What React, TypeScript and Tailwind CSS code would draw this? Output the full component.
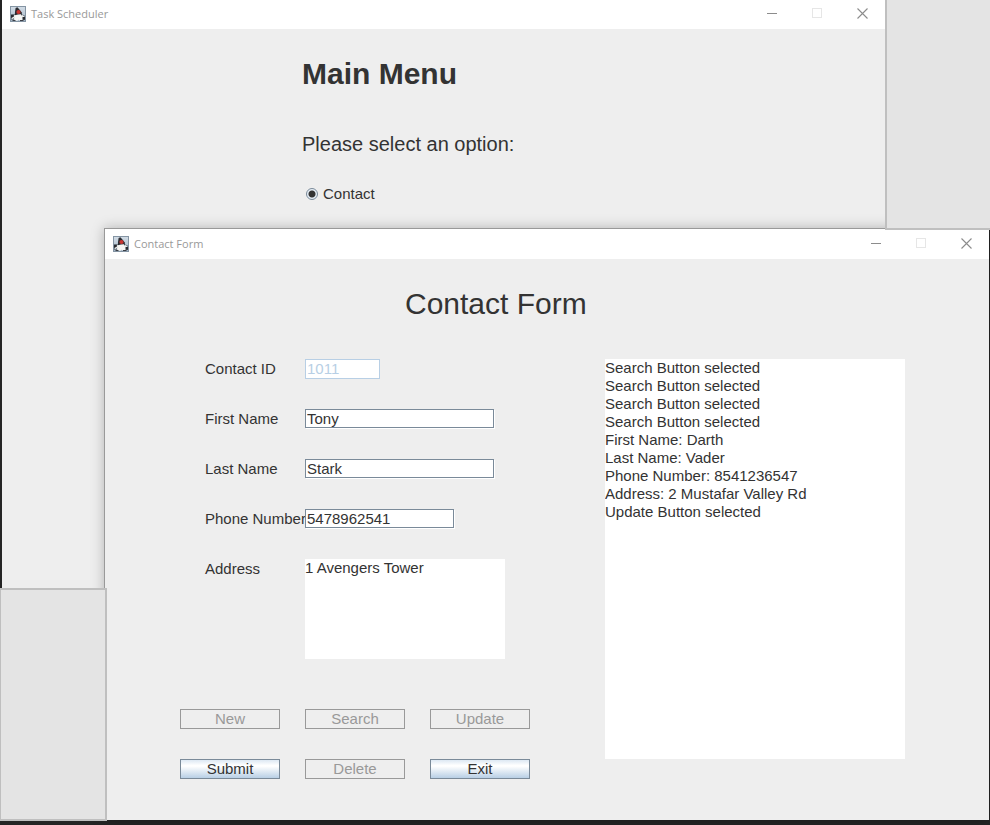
import { useState, type ReactNode } from "react";

function DukeIcon() {
  return (
    <svg width="16" height="16" viewBox="0 0 16 16" aria-hidden="true" className="shrink-0">
      <defs>
        <linearGradient id="duke-sky" x1="0" y1="0" x2="0" y2="1">
          <stop offset="0" stopColor="#d3dde6" />
          <stop offset="1" stopColor="#a3b6c8" />
        </linearGradient>
      </defs>
      <rect x="0.5" y="0.5" width="15" height="15" fill="url(#duke-sky)" stroke="#8494a3" />
      <path d="M1 9.5 5 8h6l4 1.5V14H1z" fill="#75808a" />
      <path d="M5.6 2 7.4 1.2 9 3l2.6 3.2.6 3.3H4.8L5 6z" fill="#2b2c31" />
      <path d="M5 9.2 8 8.6l3-.4 1.2 2.3.3 3.5-2.5.8-1.2-1-1.5 1H4.4L4 12z" fill="#f6f6f4" />
      <path d="M5 9.5 2 12.5M12 9.5l2 2" stroke="#f6f6f4" strokeWidth="1.5" />
      <path d="M1 8.5h2.8v2.2L1 12zM12.8 11H15v2.8h-2.2z" fill="#292b31" />
      <circle cx="8.5" cy="6" r="2.1" fill="#c93430" />
      <path d="M2.5 14.5h3M10 14.5h3.5" fill="none" stroke="#3b3f47" />
    </svg>
  );
}

const captionButton = "flex h-full w-[45px] items-center justify-center text-[#8c8c8c] disabled:text-[#e6e6e6]";

function TitleBar({ title }: { title: string }) {
  return (
    <header className="flex h-[30px] items-center bg-white pb-px pl-2">
      <DukeIcon />
      <span className="pl-[5px] font-['Open_Sans','Noto_Sans',sans-serif] text-[11px] leading-4 text-[#999999]">
        {title}
      </span>
      <div className="ml-auto flex h-full">
        <button type="button" aria-label="Minimize" className={captionButton}>
          <svg width="11" height="11" viewBox="0 0 11 11" shapeRendering="crispEdges">
            <path d="M0 5.5h10" stroke="currentColor" />
          </svg>
        </button>
        <button type="button" aria-label="Maximize" disabled className={captionButton}>
          <svg width="11" height="11" viewBox="0 0 11 11" shapeRendering="crispEdges">
            <path d="M.5.5h9v9h-9z" fill="none" stroke="currentColor" />
          </svg>
        </button>
        <button type="button" aria-label="Close" className={captionButton}>
          <svg width="11" height="11" viewBox="0 0 11 11">
            <path d="m.5.5 10 10m0-10-10 10" stroke="currentColor" strokeWidth="1.1" />
          </svg>
        </button>
      </div>
    </header>
  );
}

function Field({ id, label, children }: { id: string; label: string; children: ReactNode }) {
  return (
    <div className="flex items-start">
      <label htmlFor={id} className="w-[100px] shrink-0 whitespace-nowrap leading-5">
        {label}
      </label>
      {children}
    </div>
  );
}

const textField =
  "h-[19px] border border-[#7a8a99] bg-white pl-px leading-4 shadow-[1px_1px_0_#ffffff] outline-none";

const actionButton =
  "h-5 border border-[#7a8a99] bg-[linear-gradient(#dde8f3,#ffffff_30%,#ffffff_35%,#b8cfe5)] leading-[18px] disabled:border-[#999999] disabled:bg-[#eeeeee] disabled:bg-none disabled:text-[#999999]";

const actions = [
  { name: "New", enabled: false },
  { name: "Search", enabled: false },
  { name: "Update", enabled: false },
  { name: "Submit", enabled: true },
  { name: "Delete", enabled: false },
  { name: "Exit", enabled: true },
];

const log = [
  "Search Button selected",
  "Search Button selected",
  "Search Button selected",
  "Search Button selected",
  "First Name: Darth",
  "Last Name: Vader",
  "Phone Number: 8541236547",
  "Address: 2 Mustafar Valley Rd",
  "Update Button selected",
].join("\n");

function MainMenu() {
  const [option, setOption] = useState("contact");
  return (
    <section className="absolute top-0 right-[105px] bottom-[5px] left-[2px] bg-[#eeeeee]">
      <div className="-mt-px">
        <TitleBar title="Task Scheduler" />
      </div>
      <div className="flex flex-col items-start pt-[27px] pl-[300px]">
        <h1 className="text-[30px] leading-9 font-bold">Main Menu</h1>
        <p className="pt-10 text-[20px] leading-6">Please select an option:</p>
        <label className="flex items-center gap-[5px] pt-7 pl-1 leading-5">
          <input
            type="radio"
            name="option"
            value="contact"
            checked={option === "contact"}
            onChange={(e) => setOption(e.target.value)}
            className="size-3 appearance-none rounded-full border border-[#7a8a99] bg-[#e6eef6] checked:bg-[radial-gradient(circle,#333333_3px,#e6eef6_4px)]"
          />
          Contact
        </label>
      </div>
    </section>
  );
}

function ContactForm() {
  return (
    <section className="absolute top-[228px] right-px bottom-[5px] left-[104px] border-t border-l border-[#999999] bg-[#eeeeee] shadow-[0_0_12px_rgba(0,0,0,0.25)]">
      <TitleBar title="Contact Form" />
      <h2 className="pt-[27px] pl-[300px] text-[30px] leading-9">Contact Form</h2>
      <form className="flex gap-[75px] pt-[37px] pl-[75px]" onSubmit={(e) => e.preventDefault()}>
        <div className="w-[350px]">
          <div className="flex h-[350px] flex-col pl-[25px]">
            <div className="h-[50px]">
              <Field id="contact-id" label="Contact ID">
                <input
                  id="contact-id"
                  disabled
                  defaultValue="1011"
                  className="h-5 w-[75px] border border-[#b8cfe5] bg-white pb-px pl-px leading-4 text-[#b8cfe5]"
                />
              </Field>
            </div>
            <div className="h-[50px]">
              <Field id="first-name" label="First Name">
                <input id="first-name" defaultValue="Tony" className={`${textField} w-[189px]`} />
              </Field>
            </div>
            <div className="h-[50px]">
              <Field id="last-name" label="Last Name">
                <input id="last-name" defaultValue="Stark" className={`${textField} w-[189px]`} />
              </Field>
            </div>
            <div className="h-[50px]">
              <Field id="phone" label="Phone Number">
                <input id="phone" defaultValue="5478962541" className={`${textField} w-[149px]`} />
              </Field>
            </div>
            <Field id="address" label="Address">
              <textarea
                id="address"
                defaultValue="1 Avengers Tower"
                className="h-[100px] w-[200px] resize-none bg-white leading-[18px] outline-none"
              />
            </Field>
          </div>
          <div className="grid grid-cols-3 gap-x-[25px] gap-y-[30px]">
            {actions.map((a) => (
              <button key={a.name} type="button" disabled={!a.enabled} className={actionButton}>
                {a.name}
              </button>
            ))}
          </div>
        </div>
        <textarea
          aria-label="Activity log"
          readOnly
          value={log}
          className="h-[400px] w-[300px] resize-none bg-white leading-[18px] outline-none"
        />
      </form>
    </section>
  );
}

export default function App() {
  return (
    <main className="relative h-screen min-h-[825px] overflow-hidden bg-[#242424] font-['Liberation_Sans',Arial,sans-serif] text-[15px] text-[#333333]">
      <MainMenu />
      <ContactForm />
      <div className="absolute top-0 right-0 h-[230px] w-[105px] border-b-2 border-l-2 border-[#bfbfbf] bg-[#e4e4e4]" />
      <div className="absolute bottom-1 left-0 h-[233px] w-[107px] border-2 border-l border-[#bfbfbf] bg-[#e4e4e4]" />
    </main>
  );
}
